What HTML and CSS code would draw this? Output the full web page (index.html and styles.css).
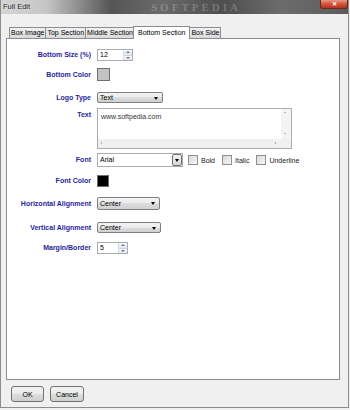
FILE: index.html
```html
<!DOCTYPE html>
<html lang="en">
<head>
    <meta charset="UTF-8">
    <title>Full Edit</title>
    <link rel="stylesheet" href="styles.css">
</head>
<body>
    <div class="window">
        <div class="titlebar">
            <span class="title">Full Edit</span>
            <span class="brand">SOFTPEDIA</span>
            <div class="close">&#x2715;</div>
        </div>
        <div class="client">
            <div class="tabs">
                <div class="tab">Box Image</div>
                <div class="tab">Top Section</div>
                <div class="tab">Middle Section</div>
                <div class="tab active">Bottom Section</div>
                <div class="tab">Box Side</div>
            </div>
            <div class="panel">
                <div class="row r1">
                    <label class="lbl">Bottom Size (%)</label>
                    <div class="spin wide"><span class="val">12</span><span class="arrows"><i class="up"></i><i class="down"></i></span></div>
                </div>
                <div class="row r2">
                    <label class="lbl">Bottom Color</label>
                    <div class="swatch gray"></div>
                </div>
                <div class="row r3">
                    <label class="lbl">Logo Type</label>
                    <div class="combo w-logo">Text</div>
                </div>
                <div class="row r4">
                    <label class="lbl top">Text</label>
                    <div class="memo">
                        <div class="memo-text">www.softpedia.com</div>
                        <div class="vscroll"><i class="up"></i><i class="down"></i></div>
                        <div class="hscroll"><i class="left"></i><i class="right"></i></div>
                        <div class="corner"></div>
                    </div>
                </div>
                <div class="row r5">
                    <label class="lbl">Font</label>
                    <div class="edit-combo"><span class="val">Arial</span><span class="drop"></span></div>
                    <div class="check"><span class="box"></span>Bold</div>
                    <div class="check"><span class="box"></span>Italic</div>
                    <div class="check"><span class="box"></span>Underline</div>
                </div>
                <div class="row r6">
                    <label class="lbl">Font Color</label>
                    <div class="swatch black"></div>
                </div>
                <div class="row r7">
                    <label class="lbl">Horizontal Alignment</label>
                    <div class="combo w-align">Center</div>
                </div>
                <div class="row r8">
                    <label class="lbl">Vertical Alignment</label>
                    <div class="combo w-align2">Center</div>
                </div>
                <div class="row r9">
                    <label class="lbl">Margin/Border</label>
                    <div class="spin"><span class="val">5</span><span class="arrows"><i class="up"></i><i class="down"></i></span></div>
                </div>
            </div>
            <div class="buttons">
                <button class="btn">OK</button>
                <button class="btn">Cancel</button>
            </div>
        </div>
    </div>
</body>
</html>
```

FILE: styles.css
```css
body {
    margin: 0;
    background: #f0f0f0;
    font-family: 'Liberation Sans', Arial, sans-serif;
    font-size: 7px;
    color: #000;
}
.window {
    width: 349px;
    height: 408px;
    box-sizing: border-box;
    border-left: 1px solid #8c8c8c;
    border-right: 1px solid #8c8c8c;
    border-bottom: 1px solid #8c8c8c;
    background: #f0f0f0;
}
.titlebar {
    position: relative;
    height: 14px;
    overflow: hidden;
    background: linear-gradient(to right, #d4d4d4 0, #c6c6c6 45px, #8a8a8a 80px, #555 110px, #6a6a6a 160px, #4e4e4e 220px, #6c6c6c 280px, #5c5c5c 100%);
}
.title {
    position: absolute;
    left: 2px;
    top: 2px;
    font-size: 7.5px;
    color: #1a1a1a;
    text-shadow: 0 0 3px #fff;
}
.brand {
    position: absolute;
    left: 150px;
    top: 1px;
    font-family: 'Liberation Serif', serif;
    font-weight: bold;
    font-size: 11px;
    line-height: 12px;
    letter-spacing: 3px;
    color: rgba(255, 255, 255, 0.22);
}
.close {
    position: absolute;
    right: 0;
    top: 0;
    width: 28px;
    height: 9px;
    box-sizing: border-box;
    border: 1px solid #6b2a1e;
    border-top: none;
    border-radius: 0 0 3px 3px;
    background: linear-gradient(#e89a85, #d0553b 50%, #b8321c);
    color: #fff;
    font-size: 6px;
    font-weight: bold;
    line-height: 8px;
    text-align: center;
}
.client {
    padding: 12px 8px 0 5px;
}
.tabs {
    display: flex;
    align-items: flex-end;
    height: 12px;
    padding-left: 3px;
}
.tab {
    height: 11px;
    box-sizing: border-box;
    padding: 0 1px;
    margin-right: -1px;
    border: 1px solid #898c95;
    border-bottom: none;
    background: linear-gradient(#f2f2f2, #e6e6e6 50%, #d9d9d9);
    line-height: 10px;
    white-space: nowrap;
}
.tab.active {
    position: relative;
    z-index: 1;
    height: 13px;
    margin: 0 -1px -1px -1px;
    padding: 0 4px;
    background: #fff;
    line-height: 11px;
}
.panel {
    height: 342px;
    box-sizing: border-box;
    border: 1px solid #898c95;
    background: #fff;
    padding-top: 10px;
}
.row {
    display: flex;
    align-items: center;
}
.r1 { margin-bottom: 7px; }
.r2 { margin-bottom: 11px; }
.r3 { margin-bottom: 5px; }
.r4 { margin-bottom: 4px; }
.r5 { margin-bottom: 8px; }
.r6 { margin-bottom: 10px; }
.r7 { margin-bottom: 12px; }
.r8 { margin-bottom: 9px; }
.lbl {
    flex: none;
    width: 84px;
    margin-right: 6px;
    text-align: right;
    font-weight: bold;
    color: #1f1f9c;
    line-height: 8px;
    white-space: nowrap;
}
.lbl.top {
    align-self: flex-start;
    margin-top: 3px;
}
.spin {
    display: flex;
    width: 36px;
    height: 12px;
    box-sizing: border-box;
    border: 1px solid #abadb3;
    background: #fff;
}
.spin:not(.wide) {
    width: 31px;
}
.spin .val {
    flex: 1;
    padding-left: 2px;
    line-height: 10px;
}
.arrows {
    display: flex;
    flex-direction: column;
    width: 8px;
    border-left: 1px solid #d5dbe3;
}
.arrows i,
.vscroll i,
.hscroll i {
    position: relative;
    flex: 1;
    display: block;
}
.arrows i {
    background: linear-gradient(#f7f9fb, #dfe6ee);
}
.arrows i + i {
    border-top: 1px solid #cfd6df;
}
.arrows i::after,
.vscroll i::after,
.hscroll i::after {
    content: '';
    position: absolute;
    left: 50%;
    top: 50%;
    border: 2px solid transparent;
}
.arrows .up::after,
.vscroll .up::after {
    margin: -3px 0 0 -2px;
    border-bottom-color: #6d7a8a;
}
.arrows .down::after,
.vscroll .down::after {
    margin: -1px 0 0 -2px;
    border-top-color: #6d7a8a;
}
.swatch {
    width: 13px;
    height: 13px;
    box-sizing: border-box;
    border: 1px solid #6f6f6f;
}
.swatch.gray { background: #c3c3c3; }
.swatch.black { width: 12px; height: 12px; background: #000; }
.combo {
    position: relative;
    box-sizing: border-box;
    height: 11px;
    padding-left: 2px;
    border: 1px solid #7f7f7f;
    border-radius: 2px;
    background: linear-gradient(#f3f3f3, #ebebeb 50%, #dddddd 50%, #d0d0d0);
    line-height: 9px;
}
.combo::after,
.edit-combo .drop::after {
    content: '';
    position: absolute;
    right: 4px;
    top: 4px;
    border-left: 2px solid transparent;
    border-right: 2px solid transparent;
    border-top: 3px solid #000;
}
.w-logo { width: 66px; }
.w-align { width: 63px; height: 13px; line-height: 11px; }
.w-align2 { width: 64px; }
.edit-combo {
    display: flex;
    width: 86px;
    height: 14px;
    box-sizing: border-box;
    border: 1px solid #abadb3;
    background: #fff;
    margin-right: 5px;
}
.edit-combo .val {
    flex: 1;
    padding-left: 2px;
    line-height: 12px;
}
.edit-combo .drop {
    position: relative;
    width: 8px;
    border: 1px solid #707070;
    border-radius: 2px;
    background: linear-gradient(#f3f3f3, #e6e6e6 50%, #d6d6d6);
}
.edit-combo .drop::after {
    right: 2px;
    top: 4px;
}
.check {
    display: flex;
    align-items: center;
    margin-right: 7px;
    color: #222;
}
.check .box {
    width: 8px;
    height: 8px;
    margin-right: 3px;
    border: 1px solid #8f8f8f;
    background: linear-gradient(135deg, #d9d9d9, #f8f8f8);
}
.memo {
    display: grid;
    grid-template-columns: 1fr 10px;
    grid-template-rows: 1fr 9px;
    width: 195px;
    height: 41px;
    box-sizing: border-box;
    border: 1px solid #abadb3;
    background: #fff;
}
.memo-text {
    padding: 4px 3px;
    color: #333;
}
.vscroll {
    display: flex;
    flex-direction: column;
    justify-content: space-between;
    background: #f4f4f4;
}
.vscroll i {
    flex: 0 0 10px;
}
.vscroll i::after {
    border-width: 1.5px;
}
.hscroll {
    display: flex;
    justify-content: space-between;
    background: #f0f0f0;
}
.hscroll i {
    flex: 0 0 10px;
}
.hscroll .left::after {
    margin: -2px 0 0 -3px;
    border-width: 1.5px;
    border-right-color: #6d6d6d;
}
.hscroll .right::after {
    margin: -2px 0 0 -1px;
    border-width: 1.5px;
    border-left-color: #6d6d6d;
}
.corner {
    background: #f0f0f0;
}
.buttons {
    display: flex;
    gap: 6px;
    padding: 6px 0 0 5px;
}
.btn {
    width: 33px;
    height: 16px;
    padding: 0;
    border: 1px solid #707070;
    border-radius: 3px;
    background: linear-gradient(#f2f2f2, #ebebeb 50%, #dddddd 50%, #cfcfcf);
    font-family: 'Liberation Sans', Arial, sans-serif;
    font-size: 7px;
    color: #000;
}
.btn + .btn {
    width: 34px;
}
```
